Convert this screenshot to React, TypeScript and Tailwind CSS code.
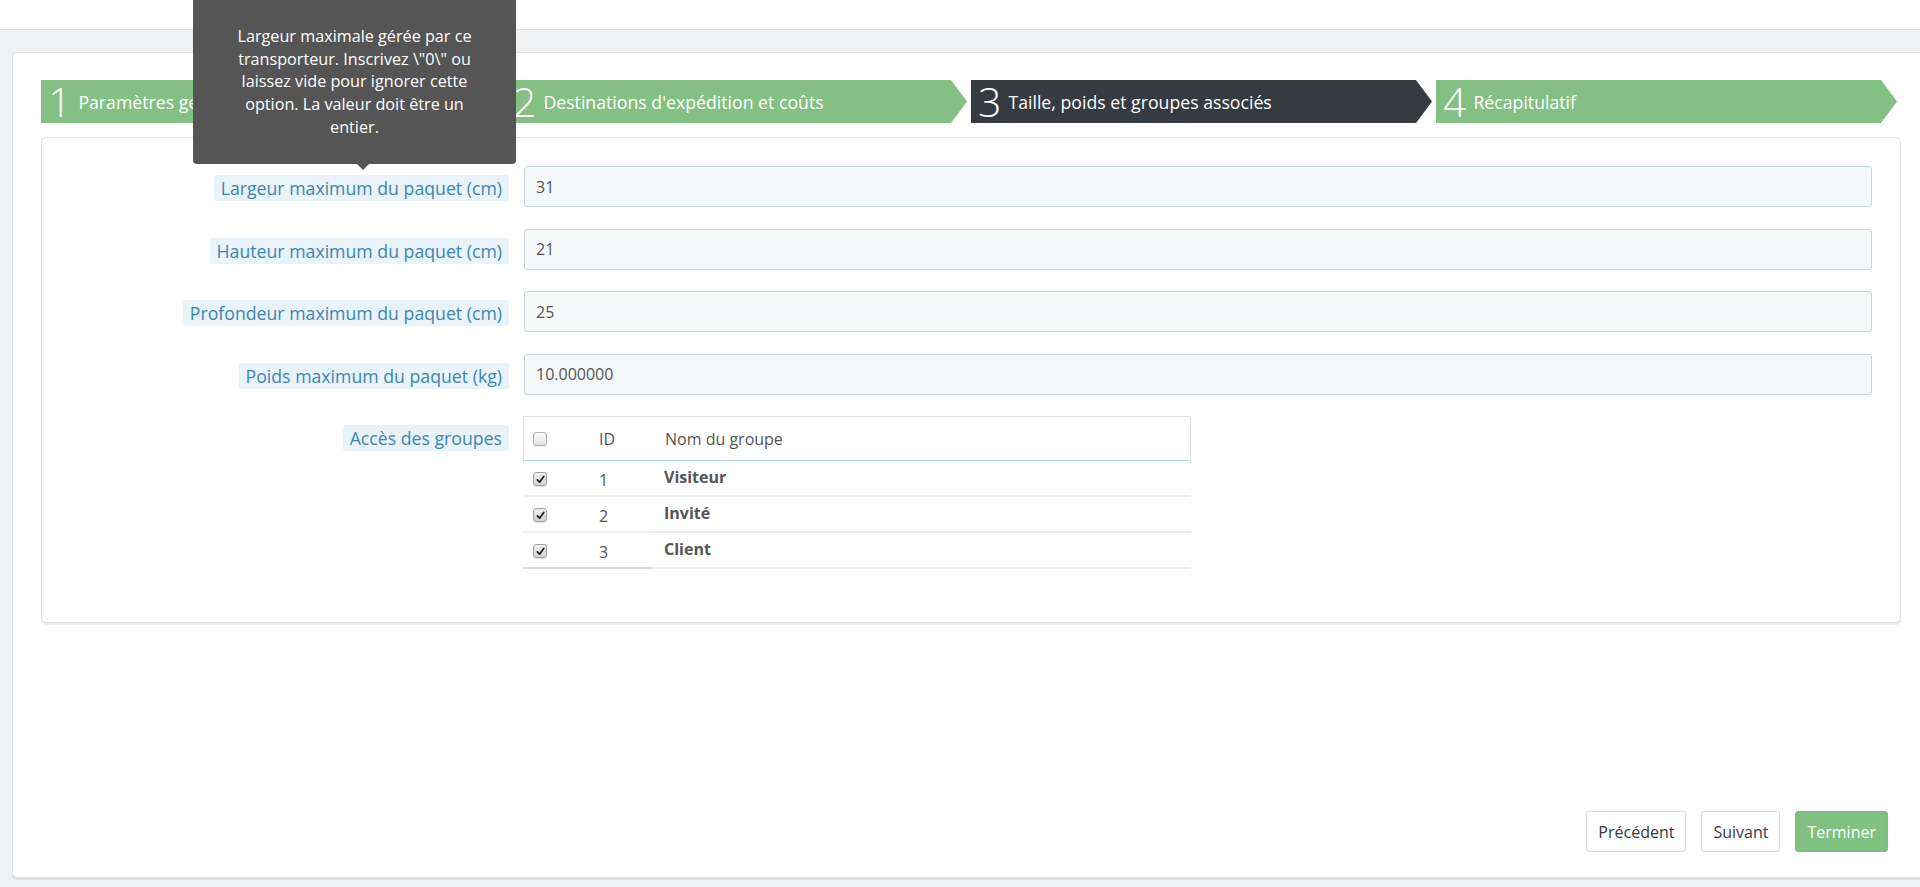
const steps = [
  { n: '1', label: 'Paramètres généraux', active: false },
  { n: '2', label: "Destinations d'expédition et coûts", active: false },
  { n: '3', label: 'Taille, poids et groupes associés', active: true },
  { n: '4', label: 'Récapitulatif', active: false },
];

const fields = [
  { label: 'Largeur maximum du paquet (cm)', value: '31' },
  { label: 'Hauteur maximum du paquet (cm)', value: '21' },
  { label: 'Profondeur maximum du paquet (cm)', value: '25' },
  { label: 'Poids maximum du paquet (kg)', value: '10.000000' },
];

const groups = [
  { id: 1, name: 'Visiteur' },
  { id: 2, name: 'Invité' },
  { id: 3, name: 'Client' },
];

function Checkbox({ checked }: { checked: boolean }) {
  if (!checked) {
    return (
      <span className="block h-[14px] w-[14px] rounded-[3px] border border-[#b0b0b0] bg-gradient-to-b from-[#fdfdfd] to-[#e2e2e2] shadow-[0_1px_1px_rgba(0,0,0,0.08)]" />
    );
  }
  return (
    <span className="flex h-[14px] w-[14px] items-center justify-center rounded-[3px] border border-[#a3a3a3] bg-gradient-to-b from-[#ececec] to-[#d2d2d2] shadow-[0_1px_1px_rgba(0,0,0,0.12)]">
      <svg viewBox="0 0 10 10" className="h-[9px] w-[9px]">
        <path d="M1.5 5.4 L4 8 L8.6 1.6" fill="none" stroke="#1e1e1e" strokeWidth="1.9" strokeLinecap="round" strokeLinejoin="round" />
      </svg>
    </span>
  );
}

function LabelTip({ children }: { children: string }) {
  return (
    <span className="inline-block rounded-[3px] bg-[#e8f3fa] px-[7px] text-[17.7px] leading-[26px] text-[#3f86b1]">
      {children}
    </span>
  );
}

export default function App() {
  return (
    <div className="relative h-[887px] w-full overflow-hidden bg-[#eff1f2] font-['Open_Sans',sans-serif] text-[#555]">
      {/* top bar */}
      <div className="h-[30px] border-b border-[#dfe2e5] bg-white" />

      <div className="pl-[12px] pt-[22px]">
        <div className="flex h-[826px] w-[1930px] flex-col rounded-[5px] border border-[#dde1e4] bg-white pl-[28px] pt-[27px] shadow-[0_2px_0_rgba(0,0,0,0.07)]">
          <div className="w-[1860px]">
            {/* wizard steps */}
            <div className="flex h-[43px]">
              {steps.map((s) => (
                <div
                  key={s.n}
                  className={
                    'flex flex-1 items-center pl-[7px] text-white [clip-path:polygon(0_0,calc(100%_-_20px)_0,calc(100%_-_4px)_50%,calc(100%_-_20px)_100%,0_100%)] ' +
                    (s.active ? 'bg-[#363a41]' : 'bg-[#84c083]')
                  }
                >
                  <span className="text-[41px] leading-none font-light">{s.n}</span>
                  <span className="ml-[7px] mt-[3px] text-[17.7px] leading-none">{s.label}</span>
                </div>
              ))}
            </div>

            {/* form */}
            <div className="mt-[14px] h-[486px] rounded-[5px] border border-[#dde1e4] bg-white pt-[28px] shadow-[0_2px_0_rgba(0,0,0,0.07)]">
              <div className="flex flex-col gap-[21.5px]">
                {fields.map((f) => (
                  <div key={f.label} className="flex">
                    <div className="w-[467px] pt-[9px] text-right">
                      <LabelTip>{f.label}</LabelTip>
                    </div>
                    <div className="ml-[15px] flex h-[41px] w-[1348px] items-center rounded-[3px] border border-[#c7d6db] bg-[#f5f8f9] px-[11px] text-[16px] text-[#555]">
                      {f.value}
                    </div>
                  </div>
                ))}

                <div className="flex">
                  <div className="w-[467px] pt-[9px] text-right">
                    <LabelTip>Accès des groupes</LabelTip>
                  </div>
                  <div className="ml-[14px] w-[668px] text-[16px] text-[#555]">
                    <div className="flex h-[45px] items-center border border-[#e1e1e1] border-b-[#a8d4ec]">
                      <div className="w-[60px] pl-[9px]">
                        <Checkbox checked={false} />
                      </div>
                      <div className="w-[70px] pl-[15px]">ID</div>
                      <div className="pl-[11px]">Nom du groupe</div>
                    </div>
                    {groups.map((g, i) => (
                      <div key={g.id} className="flex h-[36px]">
                        <div
                          className={
                            'flex w-[130px] border-b-2 ' +
                            (i === groups.length - 1 ? 'border-[#dcdcdc]' : 'border-[#efefef]')
                          }
                        >
                          <div className="w-[60px] pl-[10px] pt-[11px]">
                            <Checkbox checked />
                          </div>
                          <div className="w-[70px] pl-[16px] pt-[7px] leading-[24px]">{g.id}</div>
                        </div>
                        <div className="flex-1 border-b-2 border-[#ececec] pl-[11px] pt-[4px] font-bold leading-[24px]">
                          {g.name}
                        </div>
                      </div>
                    ))}
                  </div>
                </div>
              </div>
            </div>
          </div>

          {/* footer buttons */}
          <div className="mt-auto flex w-[1860px] justify-end gap-[15px] pb-[25px] pr-[13px] text-[16px]">
            <button className="h-[41px] rounded-[3px] border border-[#d3d8db] bg-white px-[11px] text-[#363a41]">
              Précédent
            </button>
            <button className="h-[41px] rounded-[3px] border border-[#d3d8db] bg-white px-[11px] text-[#363a41]">
              Suivant
            </button>
            <button className="h-[41px] rounded-[3px] border border-[#7cbd7c] bg-[#80c080] px-[11px] text-white">
              Terminer
            </button>
          </div>
        </div>
      </div>

      {/* tooltip over the first label */}
      <div className="absolute left-[193px] top-[-4px] h-[168px] w-[323px] rounded-[4px] bg-[#555555] pt-[29px] text-center text-[16.2px] leading-[22.7px] text-white">
        Largeur maximale gérée par ce
        <br />
        transporteur. Inscrivez \"0\" ou
        <br />
        laissez vide pour ignorer cette
        <br />
        option. La valeur doit être un
        <br />
        entier.
        <span className="absolute left-[164px] top-full h-0 w-0 border-x-[6px] border-t-[6px] border-x-transparent border-t-[#555555]" />
      </div>
    </div>
  );
}
